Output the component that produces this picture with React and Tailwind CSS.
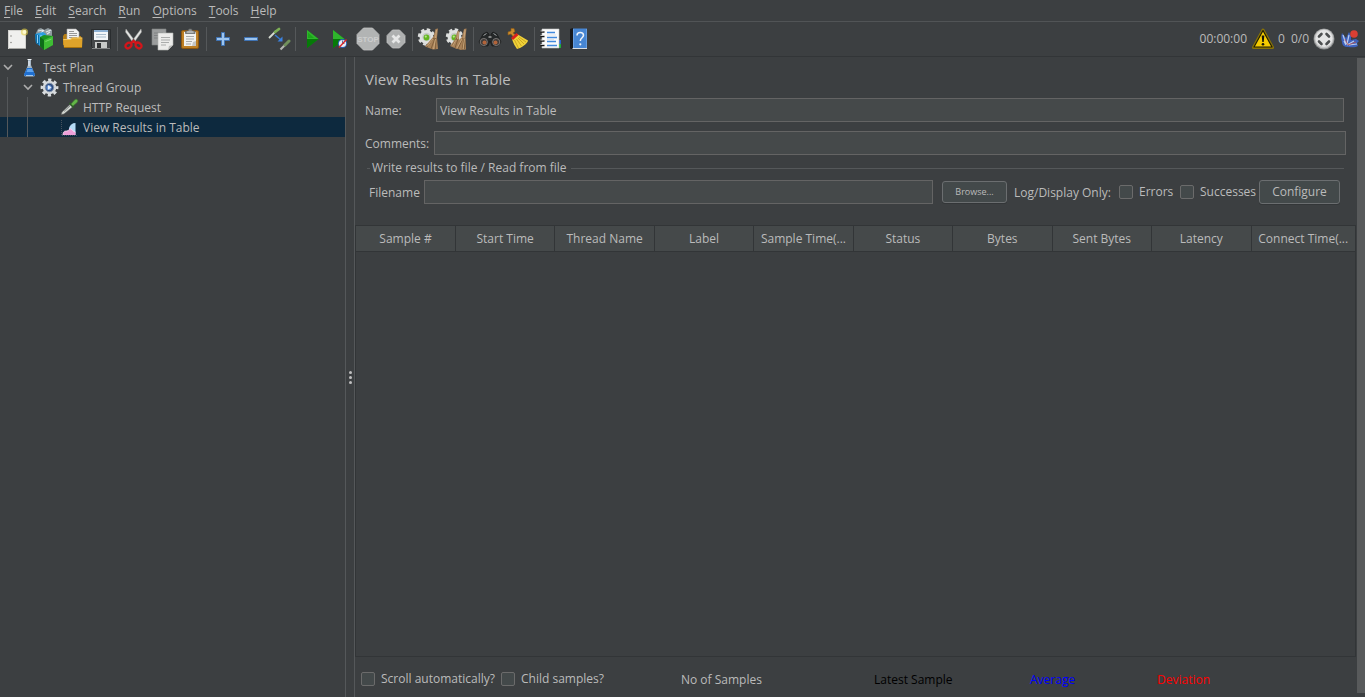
import React, { useState } from "react";

const menus = ["File", "Edit", "Search", "Run", "Options", "Tools", "Help"];

const columns = [
  "Sample #",
  "Start Time",
  "Thread Name",
  "Label",
  "Sample Time(...",
  "Status",
  "Bytes",
  "Sent Bytes",
  "Latency",
  "Connect Time(...",
];

function Icon({ children }) {
  return (
    <svg width="24" height="24" viewBox="0 0 24 24" aria-hidden="true" className="shrink-0">
      {children}
    </svg>
  );
}

function NewIcon() {
  return (
    <Icon>
      <rect x="3.5" y="3.5" width="17" height="18" fill="#f0f0ee" stroke="#d2d2cf" />
      <path d="M4 21.5h17" stroke="#a9a9a5" />
      <circle cx="6" cy="9" r="0.8" fill="#8c8c88" />
      <circle cx="6" cy="15.5" r="0.8" fill="#8c8c88" />
      <circle cx="19.5" cy="5" r="3.6" fill="#e8d44a" opacity="0.6" />
      <circle cx="19.5" cy="5" r="2" fill="#fffbd0" />
    </Icon>
  );
}

function TemplatesIcon() {
  return (
    <Icon>
      <path d="M3 6l2-4 3-1 3 2 4-2 4 2 0 6H3z" fill="#8f9a9f" />
      <path d="M5 4l5-1M8 6l3-3M13 5l5-2M14 7l3-2" stroke="#dfe6ea" strokeWidth="1.2" />
      <path d="M2 7l8-2 3 2-1 13-5-1-4-3z" fill="#2d9fe0" />
      <path d="M2 7l4 1v10l-3-2z" fill="#0b6da8" />
      <path d="M4.500 8v8M8 8v10" stroke="#a6dcfa" strokeWidth="0.9" />
      <path d="M7 10l4-2 9 1v9l-9 5-4-4z" fill="#1d9422" />
      <path d="M7 10l4 3v10l-4-4z" fill="#0d6e18" />
      <path d="M11 13l9-4v9l-9 5z" fill="#3fbd34" />
      <path d="M12.500 14.500l6-2.500" stroke="#86e07c" strokeWidth="0.8" />
    </Icon>
  );
}

function OpenIcon() {
  return (
    <Icon>
      <path d="M2 9l1.500-2h5l1 2H20v9H2z" fill="#b57d14" />
      <path d="M6 2h9l3 3v9H6z" fill="#f2f2f2" stroke="#a7a7a7" strokeWidth="0.6" />
      <path d="M8 4.500h5M8 6.500h8M8 8.500h8M8 10.500h8" stroke="#8d8d8d" strokeWidth="0.9" />
      <path d="M2 12h7l2-1.500h10.500L21 21H3z" fill="#dfa32a" />
      <path d="M3 20.500h18" stroke="#a8720d" />
      <path d="M2.500 12.500h7l2-1.500H21" stroke="#f7d272" fill="none" strokeWidth="0.8" />
    </Icon>
  );
}

function SaveIcon() {
  return (
    <Icon>
      <path d="M2.500 2.500h19v19h-17l-2-2z" fill="#45484a" stroke="#25282a" strokeWidth="0.8" />
      <path d="M5 3h14v10H5z" fill="#f3f6f8" />
      <path d="M5 3h14v2H5z" fill="#8fb2d4" />
      <path d="M7 7.500h10M7 10h10" stroke="#a9bccb" />
      <path d="M6 15h12v6H6z" fill="#c8cac9" />
      <path d="M8 16h4v5H8z" fill="#303234" />
      <path d="M3 21.500h18" stroke="#9a9c9d" strokeWidth="0.8" />
    </Icon>
  );
}

function CutIcon() {
  return (
    <Icon>
      <path d="M4 2l9 12-2 1.500L3.500 5zM19 2l-9 12 2 1.500L19.500 5z" fill="#e4e5e3" stroke="#9a9c9a" strokeWidth="0.5" />
      <circle cx="11.500" cy="12.500" r="0.9" fill="#555" />
      <ellipse cx="6.500" cy="18.500" rx="3.200" ry="2.500" transform="rotate(-40 6.500 18.500)" fill="none" stroke="#d3151a" strokeWidth="2.200" />
      <ellipse cx="16.500" cy="18.500" rx="3.200" ry="2.500" transform="rotate(40 16.500 18.500)" fill="none" stroke="#d3151a" strokeWidth="2.200" />
      <path d="M8.500 16.500l3-2.500 3 2.500" stroke="#d3151a" strokeWidth="2.400" fill="none" />
    </Icon>
  );
}

function CopyIcon() {
  return (
    <Icon>
      <path d="M2 2h14v16H2z" fill="#9b9d9d" stroke="#828484" strokeWidth="0.6" />
      <path d="M4 6h9M4 8.500h9M4 11h7" stroke="#7d7f80" strokeWidth="0.9" />
      <path d="M8 6h15v12l-5 5H8z" fill="#ececea" stroke="#b4b5b3" strokeWidth="0.6" />
      <path d="M11 10.500h9M11 13h9M11 15.500h8M11 18h5" stroke="#a3a5a4" strokeWidth="0.9" />
      <path d="M18 23l1-4 4-1z" fill="#b9bab8" />
    </Icon>
  );
}

function PasteIcon() {
  return (
    <Icon>
      <rect x="3.5" y="3.5" width="17" height="18" rx="1.5" fill="#bd7f24" stroke="#8a5510" />
      <path d="M6 5h12v14H6z" fill="#f1f1ef" />
      <path d="M18 19l-4 0 1-4 3-1z" fill="#c4c5c3" />
      <path d="M8 9.500h8M8 12h8M8 14.500h6M8 17h5" stroke="#9fa1a0" strokeWidth="0.9" />
      <path d="M7.500 6.500V4h2.500l1-2h2.500l1 2H17v2.500z" fill="#8e908f" stroke="#5c5e5e" strokeWidth="0.7" />
      <path d="M9 5h6.500" stroke="#d6d7d6" />
    </Icon>
  );
}

function PlusIcon() {
  return (
    <Icon>
      <path d="M10.500 5.500h3v5h5v3h-5v5h-3v-5h-5v-3h5z" fill="#9cc4ee" stroke="#3f73b4" />
    </Icon>
  );
}

function MinusIcon() {
  return (
    <Icon>
      <path d="M5.500 10.500h13v3h-13z" fill="#9cc4ee" stroke="#3f73b4" />
    </Icon>
  );
}

function ToggleIcon() {
  return (
    <Icon>
      <path d="M2 11l7-7" stroke="#d5dbd2" strokeWidth="1.8" />
      <path d="M8 5l4-3" stroke="#7cae55" strokeWidth="2.8" strokeLinecap="round" />
      <path d="M8 8l6 5" stroke="#3577cf" strokeWidth="1.5" />
      <path d="M15.500 9.500v5h-5z" fill="#3b82e0" />
      <path d="M13.500 22.500l5-5" stroke="#b4b7b2" strokeWidth="2.2" />
      <path d="M18 18l4-4" stroke="#71905c" strokeWidth="3" strokeLinecap="round" />
    </Icon>
  );
}

function StartIcon() {
  return (
    <Icon>
      <path d="M7 3l11.500 9L7 21z" fill="#0a960c" />
      <path d="M7 3l11.500 9H7z" fill="#2fb52c" />
      <path d="M7 21l11.500-9H7z" fill="#067a08" />
      <path d="M8 5.500l6 5.500H8z" fill="#1ca51a" />
    </Icon>
  );
}

function StartNoPauseIcon() {
  return (
    <Icon>
      <path d="M5 3l11.500 9L5 21z" fill="#0a960c" />
      <path d="M5 3l11.500 9H5z" fill="#2fb52c" />
      <path d="M5 21l11.500-9H5z" fill="#067a08" />
      <circle cx="14.5" cy="16.5" r="4.600" fill="#2b62b5" />
      <circle cx="14.5" cy="16.5" r="3.600" fill="#e9eef6" />
      <path d="M14.500 13.500v3h2" stroke="#31568f" fill="none" strokeWidth="0.8" />
      <path d="M11 20.500l7.500-8" stroke="#dc2626" strokeWidth="1.300" />
    </Icon>
  );
}

function StopIcon() {
  return (
    <Icon>
      <path d="M7.500 1h9L23 7.500v9L16.500 23h-9L1 16.500v-9z" fill="#b2b4b4" stroke="#c2c3c3" strokeWidth="0.8" />
      <text x="12" y="15" textAnchor="middle" fontSize="8" fontWeight="700" fontFamily="Liberation Sans, sans-serif" fill="#cdcece">
        STOP
      </text>
    </Icon>
  );
}

function ShutdownIcon() {
  return (
    <Icon>
      <path d="M8.500 3h7L21 8.500v7L15.500 21h-7L3 15.500v-7z" fill="#aeb0b0" stroke="#c2c3c3" strokeWidth="0.8" />
      <path d="M8.500 8.500l7 7M15.500 8.500l-7 7" stroke="#e6e7e7" strokeWidth="2.8" />
    </Icon>
  );
}

function Gear() {
  return (
    <g>
      <circle cx="9.5" cy="10" r="7.500" fill="none" stroke="#dcdedd" strokeWidth="2.4" strokeDasharray="3.400 2.490" />
      <circle cx="9.5" cy="10" r="7" fill="#dfe1e0" />
      <circle cx="9.5" cy="10" r="4.200" fill="#c6cac7" />
      <circle cx="9.5" cy="10.5" r="2.900" fill="#63b51f" />
      <circle cx="8.800" cy="9.600" r="1.100" fill="#b6e48a" />
    </g>
  );
}

function ClearIcon() {
  return (
    <Icon>
      <Gear />
      <path d="M18.500 2l2.500-.5-1 9 1 11.500-5 .5-8-3 5-6 3.500-4z" fill="#a98259" />
      <path d="M17 11l-7 9M18 11l-4 11M19 11l-.5 11" stroke="#7d5c38" strokeWidth="0.9" />
      <path d="M16 12l-5.500 7M18.500 12l-2 10M19.500 3l-1 8" stroke="#cfae83" strokeWidth="0.8" />
    </Icon>
  );
}

function ClearAllIcon() {
  return (
    <Icon>
      <Gear />
      <path d="M12.500 4l2-.5-.5 7 1 11-3 .5-7-3 4.500-6z" fill="#a98259" />
      <path d="M19 2l2.500-.5-1 9 .5 12-5 .5-6-2 4-8 3-3z" fill="#a98259" />
      <path d="M12 11l-5 8M13 12l-3 9M18 11l-5 11M19 12l-2 11M20 12l-.5 10" stroke="#7d5c38" strokeWidth="0.9" />
      <path d="M11 13l-3.500 6M17 12l-5 9M19.500 12l-1.500 10M20 3l-1 8M13.500 5l-1 7" stroke="#cfae83" strokeWidth="0.8" />
    </Icon>
  );
}

function BinocularsIcon() {
  return (
    <Icon>
      <path d="M5 7l4-2 2 2v3h2V7l2-2 4 2 4 8-3 4-6 0-2-5-2 5H4l-3-4z" fill="#252829" stroke="#141516" strokeWidth="0.6" />
      <path d="M5.500 8.500l3-2M15.500 6.500l3 2" stroke="#a2a5a6" />
      <circle cx="5.800" cy="15" r="3.600" fill="#3f3b39" stroke="#8a8785" strokeWidth="0.8" />
      <circle cx="18.200" cy="15" r="3.600" fill="#3f3b39" stroke="#8a8785" strokeWidth="0.8" />
      <circle cx="6.500" cy="15.500" r="2" fill="#b3643a" />
      <circle cx="17.500" cy="15.500" r="2" fill="#b3643a" />
      <path d="M10.500 10h3" stroke="#a7a9a9" strokeWidth="1.500" />
    </Icon>
  );
}

function BroomIcon() {
  return (
    <Icon>
      <path d="M2 5l3-1 0-2.500 3 0 1 3-2 1.500 4 3-2.500 2.500L5 7 2 8z" fill="#c98a2c" stroke="#8f5b14" strokeWidth="0.6" />
      <path d="M6 12l5-5 11 6.500c0 3-8 8-11 8.500-2-3-4-6-5-10z" fill="#efd138" />
      <path d="M13 10l7 5M12 11l6 6M10.500 12l5 7M8.500 13l4 8" stroke="#c09a1c" strokeWidth="0.8" />
      <path d="M6 12l5.500-5" stroke="#d8201c" strokeWidth="3" />
    </Icon>
  );
}

function FunctionHelperIcon() {
  return (
    <Icon>
      <path d="M19 13h3v4h-3z" fill="#2860c9" />
      <path d="M19 17h3v4h-3z" fill="#1faa3a" />
      <path d="M3 2h17v19H3z" fill="#fafafa" stroke="#c4c6c6" strokeWidth="0.6" />
      <path d="M8 5.500h8M8 10.500h10M8 14.500h9M8 18.500h10" stroke="#4189dd" strokeWidth="1.500" />
      <path d="M8 8h9M8 12.500h7" stroke="#d1d8e0" strokeWidth="0.7" />
      <path d="M1.500 5h4M1.500 9.500h4M1.500 14h4M1.500 18.500h4" stroke="#151515" strokeWidth="1.700" />
      <path d="M1.500 4h3M1.500 8.500h3M1.500 13h3M1.500 17.500h3" stroke="#dddddd" strokeWidth="0.8" />
    </Icon>
  );
}

function HelpIcon() {
  return (
    <Icon>
      <path d="M3 2l3-1v21H4l-1-1z" fill="#17191d" />
      <path d="M6 1.500h14V21H6z" fill="#4786d3" />
      <path d="M6 21h14v1H5z" fill="#d9dde2" />
      <path d="M6.500 2v19M19.500 2v19" stroke="#76a9e6" strokeWidth="0.7" />
      <path d="M10 8.500c0-2 1.300-3 3.200-3s3.300 1 3.300 2.800c0 2.400-3.200 2.600-3.200 5.700" fill="none" stroke="#eef4fb" strokeWidth="1.500" />
      <circle cx="13.300" cy="17.300" r="1.100" fill="#eef4fb" />
    </Icon>
  );
}

function WarningIcon() {
  return (
    <Icon>
      <path d="M12 3L21.500 20.500h-19z" fill="#f5cb00" stroke="#8a7405" strokeWidth="3" strokeLinejoin="round" />
      <path d="M12 3.500L21 20H3z" fill="#f5cb00" stroke="#201d06" strokeWidth="1.200" strokeLinejoin="round" />
      <path d="M10.700 8.500h2.600l-.6 6.500h-1.400z" fill="#15140a" />
      <circle cx="12" cy="17.300" r="1.300" fill="#15140a" />
    </Icon>
  );
}

function ThreadsIcon() {
  return (
    <Icon>
      <circle cx="12" cy="12" r="10.500" fill="#8c8e8e" />
      <circle cx="12" cy="11.700" r="9.700" fill="#c4c5c5" />
      <circle cx="12" cy="11.500" r="8.500" fill="#e4e5e5" />
      <path
        d="M7 9.500l2.500-2.500M14.500 7l2.500 2.500M17 14.500l-2.500 2.500M9.500 17L7 14.500"
        stroke="#4c4f50"
        strokeWidth="2.600"
        strokeLinecap="round"
      />
    </Icon>
  );
}

function FeatherIcon() {
  return (
    <Icon>
      <path d="M4 6l4 5 3-6 2 4 0 4 5-1 3 2-2 2 1 3c-3 2-7 1-10 1-4 0-6-2-6-5-1-3-1-6 0-9z" fill="#3e62bd" />
      <path d="M5 8l3 9M11 8l-2 9M16 14l-7 4M6 14l2 4M19 17l-8 1" stroke="#b9cdf0" strokeWidth="1.2" />
      <path d="M7 12l3 6 8-3" stroke="#c2574b" fill="none" strokeWidth="0.8" />
      <circle cx="16" cy="7" r="3.800" fill="#d93f33" />
    </Icon>
  );
}

const toolGroups = [
  [["New", NewIcon], ["Templates", TemplatesIcon], ["Open", OpenIcon], ["Save", SaveIcon]],
  [["Cut", CutIcon], ["Copy", CopyIcon], ["Paste", PasteIcon]],
  [["Expand All", PlusIcon], ["Collapse All", MinusIcon], ["Toggle", ToggleIcon]],
  [["Start", StartIcon], ["Start no pauses", StartNoPauseIcon], ["Stop", StopIcon], ["Shutdown", ShutdownIcon]],
  [["Clear", ClearIcon], ["Clear All", ClearAllIcon]],
  [["Search", BinocularsIcon], ["Reset Search", BroomIcon]],
  [["Function Helper", FunctionHelperIcon], ["Help", HelpIcon]],
];

function MenuBar() {
  return (
    <nav className="flex h-[22px] items-center gap-3 border-b border-[#515456] pl-1">
      {menus.map((name) => (
        <button key={name} type="button" className="leading-5">
          <span className="underline underline-offset-2">{name[0]}</span>
          {name.slice(1)}
        </button>
      ))}
    </nav>
  );
}

function Toolbar() {
  return (
    <div className="flex h-[35px] items-center border-b border-[#323537] pl-[3px] pr-[3px]">
      {toolGroups.map((group, i) => (
        <React.Fragment key={i}>
          {i > 0 && (
            <div className="flex w-[5px] justify-center">
              <div className="h-6 w-px bg-[#55585a]" />
            </div>
          )}
          {group.map(([label, Glyph]) => (
            <button key={label} type="button" aria-label={label} className="flex h-7 w-7 items-center justify-center">
              <Glyph />
            </button>
          ))}
        </React.Fragment>
      ))}
      <div className="ml-auto flex items-center">
        <span className="mr-1">00:00:00</span>
        <button type="button" aria-label="Show log errors" className="mr-[3px]">
          <WarningIcon />
        </button>
        <span className="mr-1.5">0</span>
        <span className="mr-[3px]">0/0</span>
        <ThreadsIcon />
        <span className="ml-0.5">
          <FeatherIcon />
        </span>
      </div>
    </div>
  );
}

function Chevron() {
  return (
    <span className="flex w-5 items-center pl-[3px]">
      <svg width="10" height="8" viewBox="0 0 10 8" aria-hidden="true">
        <path d="M1 2l4 4 4-4" fill="none" stroke="#adadad" strokeWidth="1.6" />
      </svg>
    </span>
  );
}

function Guide() {
  return (
    <span className="flex h-5 w-5 pl-[7px]">
      <span className="w-px bg-[#55585a]" />
    </span>
  );
}

function TreeIcon({ children }) {
  return (
    <svg width="20" height="20" viewBox="0 0 20 20" aria-hidden="true" className="mr-[3px] shrink-0">
      {children}
    </svg>
  );
}

function Tree() {
  return (
    <ul role="tree" className="w-[345px] shrink-0">
      <li role="treeitem" className="flex h-5 items-center">
        <Chevron />
        <TreeIcon>
          <path d="M8 2h3v6l4 10c0 1-1 1.500-2 1.500H6c-1 0-2-.5-2-1.500L8 8z" fill="#c9dff2" opacity="0.75" />
          <path d="M7 11h5l3 6.500c0 1-1 1.500-2 1.500H6c-1 0-2-.5-2-1.500z" fill="#1f6fd0" />
          <path d="M7.500 12h4.500l1.500 3h-7z" fill="#5fa4ee" />
          <path d="M7.500 2.500h4M9 4v5" stroke="#f4f8fc" />
          <path d="M6 18.500h7" stroke="#9fc9f5" />
        </TreeIcon>
        <span className="pt-0.5">Test Plan</span>
      </li>
      <li role="treeitem" className="flex h-5 items-center">
        <Guide />
        <Chevron />
        <TreeIcon>
          <circle cx="9.500" cy="10.500" r="7.400" fill="none" stroke="#d9dde0" strokeWidth="3" strokeDasharray="3.200 2.612" strokeDashoffset="1.600" />
          <circle cx="9.500" cy="10.500" r="6.800" fill="#d5d9dc" />
          <circle cx="9.500" cy="10.500" r="4.200" fill="#2c4b80" stroke="#8092ab" />
          <circle cx="9" cy="10.500" r="2.600" fill="#6b97d6" />
          <path d="M8 8.300l3.500 2.200L8 12.700z" fill="#e8f0fa" />
        </TreeIcon>
        <span className="pt-0.5">Thread Group</span>
      </li>
      <li role="treeitem" className="flex h-5 items-center">
        <Guide />
        <Guide />
        <span className="w-5" />
        <TreeIcon>
          <path d="M1 17.500l1-2.500 8-7.500 2.500 2.500-8.500 7z" fill="#d4d8d2" stroke="#55595a" strokeWidth="0.6" />
          <path d="M4 14.500l6.500-6" stroke="#8a8e8f" />
          <path d="M9.500 6l4.500 4.500" stroke="#2e5c28" strokeWidth="1.800" />
          <path d="M11 7l3.500-4c2-2 4.500.5 2.500 2.500l-4 3.500z" fill="#63b548" stroke="#3c7d2c" strokeWidth="0.6" />
        </TreeIcon>
        <span className="pt-0.5">HTTP Request</span>
      </li>
      <li role="treeitem" aria-selected="true" className="flex h-5 items-center bg-[#0d293e]">
        <Guide />
        <Guide />
        <span className="w-5" />
        <TreeIcon>
          <path d="M1.500 3v15.500H17" fill="none" stroke="#46525d" strokeDasharray="1 1" />
          <path d="M9 11c1-3 3-5 6.500-5v12H10z" fill="#b5dcf7" />
          <path d="M3 18c0-4 2-4 4-4s2-3 4-2 2 3 4.500 3v3z" fill="#ef9fd8" />
          <path d="M3 18c0-4 2-4 4-4s2-3 4-2 2 3 4.500 3" fill="none" stroke="#fbe3f4" strokeWidth="0.8" />
        </TreeIcon>
        <span className="pt-0.5">View Results in Table</span>
      </li>
    </ul>
  );
}

function Check({ label, className = "" }) {
  return (
    <label className={`flex items-center gap-1.5 ${className}`}>
      <input
        type="checkbox"
        className="h-3.5 w-3.5 shrink-0 appearance-none rounded-xs border border-[#6b6b6b] bg-[#43494a] checked:bg-[#8a8d8f]"
      />
      {label}
    </label>
  );
}

export default function App() {
  const [name, setName] = useState("View Results in Table");
  const field = "h-6 min-w-0 flex-1 border border-[#646464] bg-[#45494a] px-[3px] outline-none";
  const button = "rounded-[3px] border border-[#6b6e70] bg-[#43494a] shadow-[0_1px_0_#333638]";

  return (
    <div className="flex h-screen flex-col overflow-hidden bg-[#3c3f41] font-['Open_Sans','Noto_Sans',sans-serif] text-[12px] leading-5 text-[#bbbbbb]">
      <MenuBar />
      <Toolbar />
      <div className="flex min-h-0 flex-1">
        <Tree />
        <div className="flex w-2.5 shrink-0 cursor-col-resize flex-col items-center justify-center gap-0.5 border-x border-[#55585a]">
          <span className="h-[3px] w-[3px] rounded-full bg-[#c0c0c0]" />
          <span className="h-[3px] w-[3px] rounded-full bg-[#c0c0c0]" />
          <span className="h-[3px] w-[3px] rounded-full bg-[#c0c0c0]" />
        </div>

        <main className="flex min-w-0 flex-1 flex-col pr-px">
          <div className="flex flex-col px-2.5">
            <h1 className="mt-2.5 text-[15px] leading-6">View Results in Table</h1>
            <div className="mt-[7px] flex items-center pr-0.5">
              <label htmlFor="name" className="w-[71px] pt-0.5">Name:</label>
              <input id="name" value={name} onChange={(e) => setName(e.target.value)} className={field} />
            </div>
            <div className="mt-[9px] flex items-center">
              <label htmlFor="comments" className="w-[69px] pt-0.5">Comments:</label>
              <input id="comments" className={field} />
            </div>
          </div>

          <fieldset className="mx-3 min-w-0">
            <div className="mt-[3px] flex items-center gap-1">
              <span className="-mr-0.5 h-px w-[3px] bg-[#55585a]" />
              <span>Write results to file / Read from file</span>
              <span className="h-px flex-1 bg-[#55585a]" />
            </div>
            <div className="mt-0.5 flex items-center pl-0.5 pr-1">
              <label htmlFor="filename" className="w-[55px] pt-0.5">Filename</label>
              <input id="filename" className={field} />
              <button type="button" className={`ml-[9px] h-[22px] w-[65px] text-[9px] ${button}`}>Browse...</button>
              <span className="ml-[7px] w-[105px] whitespace-nowrap pt-0.5">Log/Display Only:</span>
              <Check label="Errors" className="w-[61px]" />
              <Check label="Successes" className="w-[79px]" />
              <button type="button" className={`h-6 w-[81px] ${button}`}>Configure</button>
            </div>
          </fieldset>

          <div className="mt-[21px] min-h-0 flex-1 border border-[#323537]">
            <table className="w-full table-fixed border-collapse">
              <thead>
                <tr className="h-[25px] bg-[#45494a]">
                  {columns.map((col) => (
                    <th
                      key={col}
                      className="truncate border-b border-r border-[#323537] p-0 pt-0.5 text-center font-normal last:w-[104px] last:border-r-0"
                    >
                      {col}
                    </th>
                  ))}
                </tr>
              </thead>
              <tbody />
            </table>
          </div>

          <footer className="flex h-10 items-center whitespace-nowrap pl-1.5 pt-1">
            <Check label="Scroll automatically?" className="w-[140px]" />
            <Check label="Child samples?" className="w-[180px]" />
            <div className="flex pt-0.5">
              <span className="w-[193px]">No of Samples</span>
              <span className="w-[156px] text-black">Latest Sample</span>
              <span className="w-[127px] text-[#0000ff]">Average</span>
              <span className="text-[#ff0000]">Deviation</span>
            </div>
          </footer>
        </main>
        <div className="mb-1 mt-px w-2 shrink-0 bg-[#585a5b]" />
      </div>
    </div>
  );
}
